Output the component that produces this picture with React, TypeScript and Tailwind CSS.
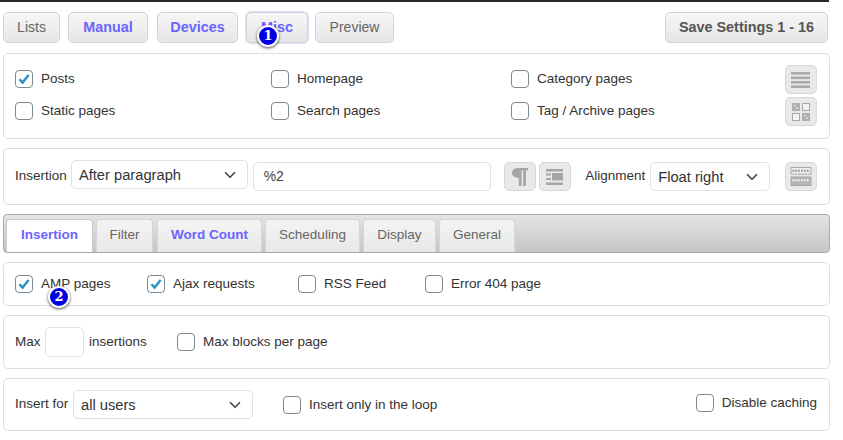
import type { ReactNode } from 'react';
import { ChevronDown } from 'lucide-react';

function Btn({ children, blue, className = '' }: { children: ReactNode; blue?: boolean; className?: string }) {
  return (
    <div
      className={`flex h-[31px] items-center justify-center rounded-[5px] border border-[#d3d3d3] bg-gradient-to-b from-[#f6f6f6] to-[#e6e6e6] ${
        blue ? 'text-[14.4px] font-bold text-[#6b64ff]' : 'text-[14px] text-[#666]'
      } ${className}`}
    >
      {children}
    </div>
  );
}

function IconBtn({ children }: { children: ReactNode }) {
  return (
    <div className="flex h-[29px] w-[32px] items-center justify-center rounded-[5px] border border-[#d8d8d8] bg-[#e9e9e9]">
      {children}
    </div>
  );
}

function Check({ label, on, className = '' }: { label: string; on?: boolean; className?: string }) {
  return (
    <div className={`flex items-center gap-[8px] text-[13.5px] text-[#333] ${className}`}>
      <div className="flex h-[18px] w-[18px] items-center justify-center rounded-[4px] border border-[#7e8993] bg-white">
        {on && (
          <svg width="14" height="14" viewBox="0 0 14 14">
            <path d="M2.5 7.2 L5.6 10.6 L11.6 3" fill="none" stroke="#2a91c0" strokeWidth="2.4" />
          </svg>
        )}
      </div>
      <span className="pt-[1px]">{label}</span>
    </div>
  );
}

function Panel({ children, className = '' }: { children: ReactNode; className?: string }) {
  return <div className={`rounded-[5px] border border-[#dedede] bg-white ${className}`}>{children}</div>;
}

function Select({ value, className = '' }: { value: string; className?: string }) {
  return (
    <div className={`flex h-[29px] items-center justify-between rounded-[5px] border border-[#e0e0e0] bg-white pl-[7px] pr-[8px] text-[14.7px] text-[#333] ${className}`}>
      <span className="pt-[2px]">{value}</span>
      <ChevronDown size={18} strokeWidth={2.2} className="text-[#444]" />
    </div>
  );
}

function Tab({ label, active, blue, className = '' }: { label: string; active?: boolean; blue?: boolean; className?: string }) {
  return (
    <div
      className={`flex h-[33px] items-center justify-center rounded-t-[4px] border border-b-0 pb-[1px] text-[13.5px] ${
        active ? 'border-[#c8c8c8] bg-white' : 'border-[#d6d6d6] bg-gradient-to-b from-[#f4f4f4] to-[#e8e8e8]'
      } ${blue ? 'font-bold text-[#6b64ff]' : 'text-[#666]'} ${className}`}
    >
      {label}
    </div>
  );
}

function Badge({ n, className = '' }: { n: number; className?: string }) {
  return (
    <div className={`absolute flex h-[22px] w-[22px] items-center justify-center rounded-full border-2 border-white bg-[#0000e0] text-[13px] font-bold text-white shadow-[0_1px_3px_rgba(0,0,0,0.7)] [font-family:'DejaVu_Serif',serif] ${className}`}>
      {n}
    </div>
  );
}

export default function App() {
  return (
    <div className="relative h-[440px] w-[843px] overflow-hidden bg-white [font-family:'Liberation_Sans',Arial,sans-serif]">
      <div className="h-[2px] w-[829px] bg-[#23282d]" />

      <div className="ml-[3px] mt-[10px] flex w-[825px] gap-[8px]">
        <Btn className="w-[57px]">Lists</Btn>
        <Btn blue className="w-[80px]">Manual</Btn>
        <Btn blue className="ml-[1px] w-[81px]">Devices</Btn>
        <Btn blue className="w-[62px] border-[#6c9fe0] shadow-[0_0_2px_#6c9fe0]">Misc</Btn>
        <Btn className="-ml-[1px] w-[79px]">Preview</Btn>
        <Btn className="ml-auto w-[163px] !text-[14.4px] font-bold !text-[#555]">Save Settings 1 - 16</Btn>
      </div>

      <Panel className="ml-[3px] mt-[10px] flex h-[86px] w-[827px] pl-[11px] pr-[12px] pt-[11px]">
        <div className="-mt-[2px] grid h-[64px] w-[770px] grid-cols-[256px_240px_1fr] grid-rows-[32px_32px] items-center">
          <Check on label="Posts" />
          <Check label="Homepage" />
          <Check label="Category pages" />
          <Check label="Static pages" />
          <Check label="Search pages" />
          <Check label="Tag / Archive pages" />
        </div>
        <div className="flex flex-col gap-[3px]">
          <IconBtn>
            <svg width="20" height="16" viewBox="0 0 20 16" fill="#a9a9a9">
              <rect y="0" width="19" height="2.6" />
              <rect y="4.5" width="19" height="2.6" />
              <rect y="9" width="19" height="2.6" />
              <rect y="13.4" width="19" height="2.6" />
            </svg>
          </IconBtn>
          <IconBtn>
            <svg width="20" height="20" viewBox="0 0 20 20">
              <g fill="#f4f4f4" stroke="#a9a9a9" strokeWidth="1">
                <rect x="11.5" y="1.5" width="7" height="7" />
                <rect x="1.5" y="11.5" width="7" height="7" />
              </g>
              <g fill="#b0b0b0">
                <rect x="1" y="1" width="8" height="8" />
                <rect x="11" y="11" width="8" height="8" />
              </g>
              <g fill="#e4e4e4">
                <rect x="3" y="3" width="1.5" height="1.5" />
                <rect x="5.5" y="5.5" width="1.5" height="1.5" />
                <rect x="13" y="13" width="1.5" height="1.5" />
                <rect x="15.5" y="15.5" width="1.5" height="1.5" />
              </g>
            </svg>
          </IconBtn>
        </div>
      </Panel>

      <Panel className="ml-[3px] mt-[9px] flex h-[57px] w-[827px] items-start pl-[11px] pr-[12px] pt-[11px]">
        <span className="mt-[6px] w-[56px] text-[13.5px] text-[#333]">Insertion</span>
        <Select value="After paragraph" className="w-[177px]" />
        <div className="ml-[5px] mt-[2px] flex h-[29px] w-[239px] items-center rounded-[5px] border border-[#e0e0e0] pl-[10px] text-[14px] text-[#444]">%2</div>
        <div className="ml-[13px] mt-[2px] flex gap-[3px]">
          <IconBtn>
            <svg width="16" height="18" viewBox="0 0 16 20" preserveAspectRatio="none" fill="#a6a6a6">
              <path d="M6 0 H16 V2.5 H14 V20 H11.2 V2.5 H9.6 V20 H6.8 V11 C2.5 11 0 8.5 0 5.5 C0 2.5 2.5 0 6 0 Z" />
            </svg>
          </IconBtn>
          <IconBtn>
            <svg width="18" height="16" viewBox="0 0 18 16" fill="#a6a6a6">
              <rect width="17" height="2.5" />
              <rect x="0" y="4.5" width="5" height="2" />
              <rect x="0" y="9" width="5" height="2" />
              <rect x="6" y="4" width="11" height="7.5" />
              <rect y="13.5" width="17" height="2.5" />
            </svg>
          </IconBtn>
        </div>
        <span className="ml-[14px] mt-[6px] w-[65px] text-[13.5px] text-[#333]">Alignment</span>
        <Select value="Float right" className="mt-[2px] w-[120px]" />
        <div className="ml-[15px] mt-[2px]">
          <IconBtn>
            <svg width="22" height="19" viewBox="0 0 22 20" fill="none">
              <rect x="0.5" y="0.5" width="21" height="7" fill="#eee" stroke="#a6a6a6" />
              <rect x="0.5" y="10.5" width="21" height="9" fill="#b5b5b5" stroke="#a6a6a6" />
              <path d="M2 4 H20" stroke="#999" strokeWidth="2" strokeDasharray="2 1" />
              <path d="M2 14 H20" stroke="#eee" strokeWidth="2" strokeDasharray="2 1" />
            </svg>
          </IconBtn>
        </div>
      </Panel>

      <div className="ml-[3px] mt-[9px] flex h-[39px] w-[827px] items-end gap-[3px] rounded-[4px] border border-[#aaa] bg-gradient-to-b from-[#e4e4e4] to-[#c6c6c6] pl-[2px]">
        <Tab active blue label="Insertion" className="w-[87px]" />
        <Tab label="Filter" className="w-[57px]" />
        <Tab blue label="Word Count" className="ml-[1px] w-[105px]" />
        <Tab label="Scheduling" className="w-[95px]" />
        <Tab label="Display" className="w-[73px]" />
        <Tab label="General" className="w-[76px]" />
      </div>

      <Panel className="ml-[3px] mt-[9px] flex h-[44px] w-[827px] items-center pl-[11px]">
        <Check on label="AMP pages" className="w-[132px]" />
        <Check on label="Ajax requests" className="w-[151px]" />
        <Check label="RSS Feed" className="w-[127px]" />
        <Check label="Error 404 page" />
      </Panel>

      <Panel className="ml-[3px] mt-[9px] flex h-[54px] w-[827px] items-center pl-[11px]">
        <span className="w-[30px] text-[13.5px] text-[#333]">Max</span>
        <div className="h-[30px] w-[39px] rounded-[5px] border border-[#e0e0e0]" />
        <span className="ml-[5px] w-[88px] text-[13.5px] text-[#333]">insertions</span>
        <Check label="Max blocks per page" />
      </Panel>

      <Panel className="ml-[3px] mt-[9px] flex h-[53px] w-[827px] items-center pl-[11px] pr-[12px]">
        <span className="w-[58px] text-[13.5px] text-[#333]">Insert for</span>
        <Select value="all users" className="w-[180px]" />
        <Check label="Insert only in the loop" className="ml-[30px]" />
        <Check label="Disable caching" className="ml-auto -mt-[3px]" />
      </Panel>

      <Badge n={1} className="left-[257px] top-[25px]" />
      <Badge n={2} className="left-[48px] top-[286px]" />
    </div>
  );
}
